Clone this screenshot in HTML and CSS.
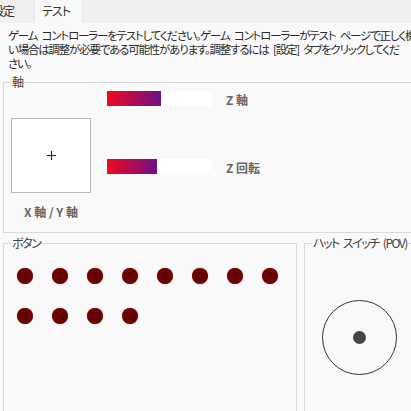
FILE: index.html
```html
<!DOCTYPE html>
<html>
	<head>
		<meta charset="UTF-8">
		<title>ゲーム コントローラー テスト</title>
		<link rel="stylesheet" href="styles.css">
	</head>
	<body>
		<div class="tabs">
			<div class="tab tab-off">設定</div>
			<div class="tab tab-on">テスト</div>
		</div>

		<div class="page">
			<div class="intro">
				<p>ゲーム コントローラーをテストしてください。ゲーム コントローラーがテスト ページで正しく機能しな</p>
				<p>い場合は調整が必要である可能性があります。調整するには [設定] タブをクリックしてくだ</p>
				<p>さい。</p>
			</div>

			<fieldset class="group axes">
				<legend>軸</legend>
				<div class="axes-body">
					<div class="xy">
						<div class="xy-box">
							<svg width="9" height="9" viewBox="0 0 9 9"><path d="M4.5 0v9M0 4.5h9" stroke="#222" stroke-width="1.2"/></svg>
						</div>
						<div class="axis-label xy-label">X 軸 / Y 軸</div>
					</div>
					<div class="sliders">
						<div class="bar"><div class="bar-fill" style="width:54px"></div></div>
						<div class="axis-label">Z 軸</div>
						<div class="bar"><div class="bar-fill" style="width:50px"></div></div>
						<div class="axis-label">Z 回転</div>
					</div>
				</div>
			</fieldset>

			<div class="bottom">
				<fieldset class="group buttons">
					<legend>ボタン</legend>
					<div class="btn-grid">
						<span class="btn">1</span>
						<span class="btn">2</span>
						<span class="btn">3</span>
						<span class="btn">4</span>
						<span class="btn">5</span>
						<span class="btn">6</span>
						<span class="btn">7</span>
						<span class="btn">8</span>
						<span class="btn">9</span>
						<span class="btn">10</span>
						<span class="btn">11</span>
						<span class="btn">12</span>
					</div>
				</fieldset>

				<fieldset class="group hat">
					<legend>ハット スイッチ (POV)</legend>
					<div class="hat-body">
						<div class="pov"><div class="pov-dot"></div></div>
					</div>
				</fieldset>
			</div>
		</div>
	</body>
</html>
```

FILE: styles.css
```css
*{
	margin:0; padding:0;
	box-sizing:border-box;
}

html,body{
	height:100%;
	overflow:hidden;
}

body{
	background:#f9f9f9;
	color:#222;
	font-family:"Noto Sans CJK JP","Noto Sans",sans-serif;
	font-size:12px;
	line-height:14px;
	font-feature-settings:"palt";
}

.tabs{
	height:23px;
	display:flex;
	background:#f0f0f0;
	overflow:hidden;
}

.tab{
	height:23px;
	line-height:22px;
	color:#333;
	white-space:nowrap;
	letter-spacing:-1px;
}

.tab-off{
	width:43px;
	margin-left:-9px;
	padding-left:1px;
}

.tab-on{
	width:49px;
	padding-left:7px;
	background:#f9f9f9;
	border-left:1px solid #e6e6e6;
	border-right:1px solid #e6e6e6;
}

.page{
	overflow:hidden;
}

.intro{
	padding:5px 0 0 8px;
	white-space:nowrap;
	font-size:11.5px;
	letter-spacing:-1.2px;
	word-spacing:3px;
	color:#2a2a2a;
}

.group{
	border:1px solid #dadada;
	padding:0 0 0 7px;
	min-inline-size:0;
}

.group legend{
	padding:0 1px;
	line-height:14px;
	color:#444;
	letter-spacing:-1.5px;
	word-spacing:3px;
	white-space:nowrap;
}

.axes{
	margin:5px -40px 0 3px;
}

.axes-body{
	display:flex;
	padding-bottom:13px;
}

.xy{
	margin-top:29px;
	width:80px;
}

.xy-box{
	width:80px;
	height:75px;
	background:#fff;
	border:1px solid #b9b9b9;
	display:flex;
	align-items:center;
	justify-content:center;
}

.axis-label{
	color:#666;
	font-weight:bold;
	white-space:nowrap;
}

.xy-label{
	margin-top:12px;
	text-align:center;
}

.sliders{
	margin:2px 0 0 16px;
	display:grid;
	grid-template-columns:105px auto;
	column-gap:14px;
	row-gap:52px;
	align-items:start;
	align-content:start;
}

.sliders .axis-label{
	margin-top:2px;
}

.bar{
	width:105px;
	height:15px;
	background:#fff;
}

.bar-fill{
	height:100%;
	background:linear-gradient(to right,#ee0a1e,#6e1088);
}

.bottom{
	display:flex;
	margin-top:3px;
}

.buttons{
	width:294px;
	height:200px;
	margin-left:3px;
}

.btn-grid{
	display:grid;
	grid-template-columns:repeat(8,16px);
	column-gap:19px;
	row-gap:24px;
	padding-top:18px;
	margin-left:6px;
}

.btn{
	width:16px;
	height:16px;
	border-radius:50%;
	background:#6c0404;
	box-shadow:0 0 1px #a05050;
	color:#520000;
	font-size:10px;
	line-height:16px;
	text-align:center;
	font-weight:bold;
}

.hat{
	flex:1;
	height:200px;
	margin:0 -40px 0 7px;
}

.hat-body{
	padding:50px 0 0 10px;
}

.pov{
	width:75px;
	height:75px;
	border:1px solid #333;
	border-radius:50%;
	display:flex;
	align-items:center;
	justify-content:center;
}

.pov-dot{
	width:13px;
	height:13px;
	border-radius:50%;
	background:#444;
}
```
